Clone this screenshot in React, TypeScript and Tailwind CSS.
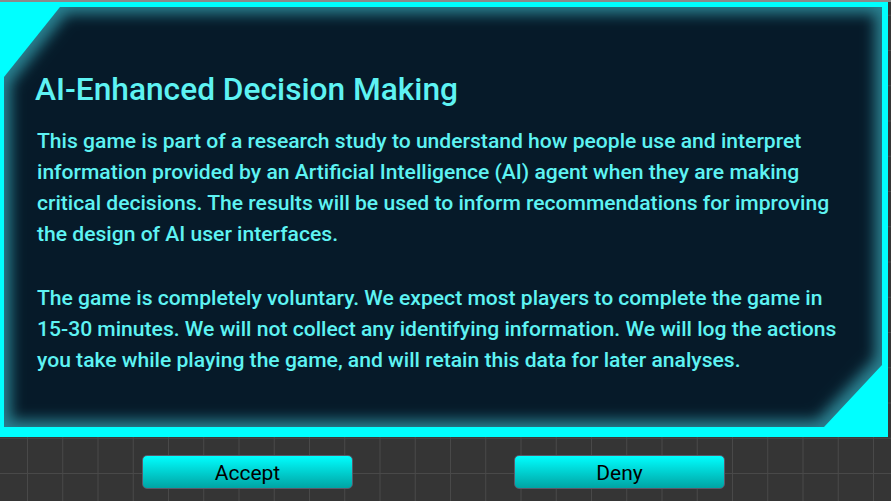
const font = { fontFamily: "Roboto, 'Liberation Sans', sans-serif" };

const shape =
  "[clip-path:polygon(56px_0,100%_0,100%_calc(100%_-_62px),calc(100%_-_58px)_100%,0_100%,0_70px)]";

export default function App() {
  return (
    <div
      style={font}
      className="w-[891px] h-[501px] overflow-hidden bg-[#353535] bg-[linear-gradient(to_right,#494949_1px,transparent_1px),linear-gradient(to_bottom,#494949_1px,transparent_1px)] bg-[size:35.25px_35.25px] bg-[position:27px_14.75px]"
    >
      <div className="h-[2px] bg-[#8a8a8a]" />
      <div className="relative w-[888px] h-[435px] bg-[#00ffff]">
        <div className={`absolute left-[4px] top-[5px] right-[6px] bottom-[10px] bg-[#2a8090] ${shape}`}>
          <div className="absolute inset-0 blur-[7px]">
            <div className={`absolute inset-[7px] bg-[#061a29] ${shape}`} />
          </div>
          <div className="relative pl-[31px] pt-[64px] whitespace-nowrap">
            <h1 className="text-[31.7px] leading-[38px] font-medium text-[#5ef3f3]">
              AI-Enhanced Decision Making
            </h1>
            <div className="mt-[16px] pl-[2px] text-[21.1px] leading-[31px] font-medium text-[#5ef3f3]">
              <p>
                This game is part of a research study to understand how people use and interpret
                <br />
                information provided by an Artificial Intelligence (AI) agent when they are making
                <br />
                critical decisions. The results will be used to inform recommendations for improving
                <br />
                the design of AI user interfaces.
              </p>
              <p className="mt-[33px]">
                The game is completely voluntary. We expect most players to complete the game in
                <br />
                15-30 minutes. We will not collect any identifying information. We will log the actions
                <br />
                you take while playing the game, and will retain this data for later analyses.
              </p>
            </div>
          </div>
        </div>
      </div>
      <div className="flex pl-[142px] pt-[18px] gap-[161px]">
        <button className="w-[211px] h-[34px] pt-[2px] rounded-[5px] border border-[#5a5a6a] bg-gradient-to-b from-[#00ffff] to-[#00a4a4] text-[21px] text-black">
          Accept
        </button>
        <button className="w-[211px] h-[34px] pt-[2px] rounded-[5px] border border-[#5a5a6a] bg-gradient-to-b from-[#00ffff] to-[#00a4a4] text-[21px] text-black">
          Deny
        </button>
      </div>
    </div>
  );
}
